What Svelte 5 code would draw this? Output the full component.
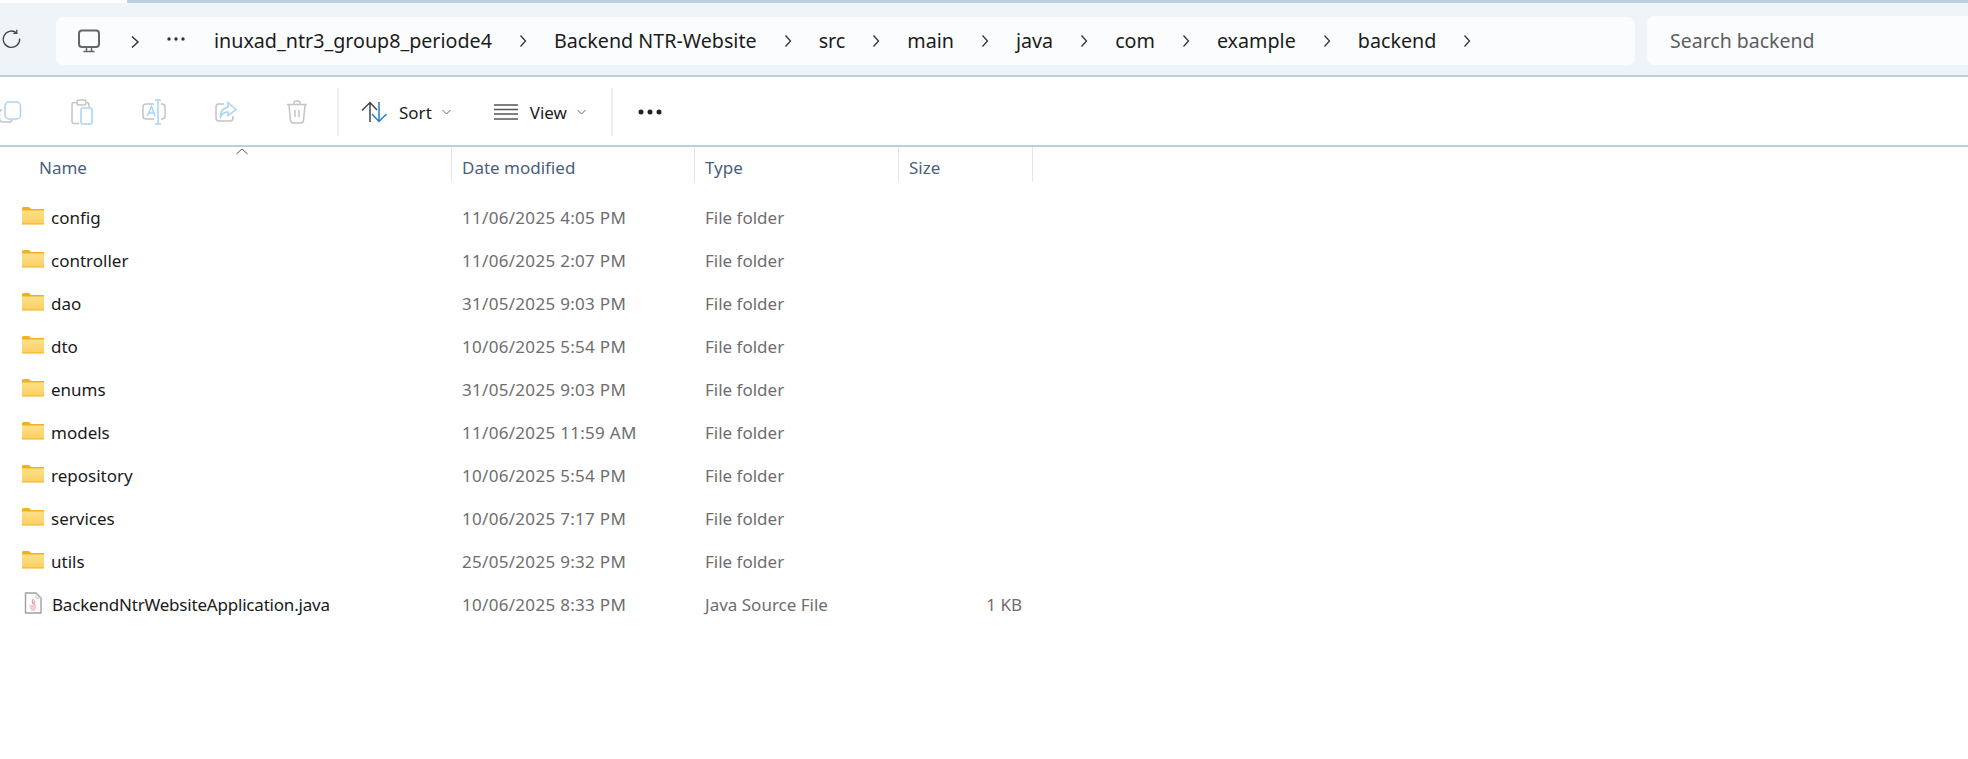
<script>
  const crumbs = ['inuxad_ntr3_group8_periode4','Backend NTR-Website','src','main','java','com','example','backend'];
  const rows = [
    ['config','11/06/2025 4:05 PM'],['controller','11/06/2025 2:07 PM'],['dao','31/05/2025 9:03 PM'],
    ['dto','10/06/2025 5:54 PM'],['enums','31/05/2025 9:03 PM'],['models','11/06/2025 11:59 AM'],
    ['repository','10/06/2025 5:54 PM'],['services','10/06/2025 7:17 PM'],['utils','25/05/2025 9:32 PM']
  ];
</script>

<div class="page">
  <div class="strip"></div>
  <header class="nav">
    <svg class="refresh" width="20" height="20" viewBox="0 0 20 20" fill="none" stroke="#444" stroke-width="1.3"><path d="M15.5 3.8A8.2 8.2 0 1 0 18.6 9.5"/><path d="M15.8 0.8V4.3H12.4"/></svg>
    <div class="address">
      <svg class="monitor" width="24" height="24" viewBox="0 0 24 24" fill="none" stroke="#666" stroke-width="2"><rect x="2" y="1.5" width="20" height="16.5" rx="3"/><path d="M9.5 18.5V22M14.5 18.5V22M6.5 22.5H17.5" stroke-width="1.5"/></svg>
      <svg class="chev first" width="10" height="14" viewBox="0 0 10 14" fill="none" stroke="#333" stroke-width="1.5"><path d="M2 1.5L8 7L2 12.5"/></svg>
      <svg class="ell" width="18" height="4" viewBox="0 0 18 4" fill="#333"><circle cx="2" cy="2" r="1.7"/><circle cx="9" cy="2" r="1.7"/><circle cx="16" cy="2" r="1.7"/></svg>
      {#each crumbs as c}
        <span class="crumb">{c}</span>
        <svg class="chev" width="10" height="14" viewBox="0 0 10 14" fill="none" stroke="#333" stroke-width="1.3"><path d="M2.5 1.5L7.5 7L2.5 12.5"/></svg>
      {/each}
    </div>
    <div class="search">Search backend</div>
  </header>

  <div class="toolbar">
    <div class="tools">
      <svg width="22" height="24" viewBox="0 0 22 24" fill="none" stroke-width="1.5"><path d="M2 9.5Q0 10-.5 12V19Q0 22 3 22H9Q11.5 22 12 20" stroke="#c4c4c4"/><rect x="5" y="2" width="15.5" height="17" rx="4" stroke="#a9d3f5"/></svg>
      <svg width="22" height="26" viewBox="0 0 22 26" fill="none" stroke-width="1.5"><path d="M6 3.5H3Q1 3.5 1 6V22Q1 24.5 3 24.5H8M16 3.5Q18 3.5 18 6V8" stroke="#c4c4c4"/><rect x="6" y="1" width="9" height="5" rx="2" stroke="#c4c4c4"/><rect x="10" y="9" width="11" height="16" rx="2" stroke="#a9d3f5"/></svg>
      <svg width="24" height="26" viewBox="0 0 24 26" fill="none" stroke-width="1.5"><path d="M12 5H4Q1 5 1 8V17Q1 20 4 20H12M19 5H20Q23 5 23 8V17Q23 20 20 20H19" stroke="#c4c4c4"/><path d="M13 1H19M16 1V25M13 25H19M5.5 17L9.5 7.5L13 17M7 14H12" stroke="#a9d3f5"/></svg>
      <svg width="22" height="22" viewBox="0 0 22 22" fill="none" stroke-width="1.5"><path d="M9 3H3.5Q1 3 1 6V17Q1 20 4 20H15Q18 20 18 17V15" stroke="#c4c4c4"/><path d="M13 1.5L21 8.5L13 14.5V11Q8 11 5.5 16Q5 8 13 6Z" stroke="#a9d3f5"/></svg>
      <svg width="22" height="24" viewBox="0 0 22 24" fill="none" stroke="#c4c4c4" stroke-width="1.5"><path d="M1 4.5H21M8 4V3Q8 1 10 1H12Q14 1 14 3V4M3 5L4.5 20.5Q5 23 7.5 23H14.5Q17 23 17.5 20.5L19 5M9 10V17M13 10V17"/></svg>
    </div>
    <span class="sep"></span>
    <button class="tb sort">
      <svg width="26" height="22" viewBox="0 0 26 22" fill="none" stroke-width="1.5"><path d="M9 21V2M1 9.5L9 1.5L16 9" stroke="#444"/><path d="M18 1V20M11 13L18 20.5L25.5 13" stroke="#1a7fd4"/></svg>
      <span>Sort</span>
      <svg class="caret" width="9" height="6" viewBox="0 0 9 6" fill="none" stroke="#666"><path d="M.5 1L4.5 5L8.5 1"/></svg>
    </button>
    <button class="tb view">
      <svg width="24" height="16" viewBox="0 0 24 16" fill="none" stroke="#555" stroke-width="1.5"><path d="M0 1H24M0 5.5H24M0 10H24M0 15H24"/></svg>
      <span>View</span>
      <svg class="caret" width="9" height="6" viewBox="0 0 9 6" fill="none" stroke="#666"><path d="M.5 1L4.5 5L8.5 1"/></svg>
    </button>
    <span class="sep second"></span>
    <svg class="more" width="24" height="6" viewBox="0 0 24 6" fill="#222"><circle cx="3" cy="3" r="2.5"/><circle cx="12" cy="3" r="2.5"/><circle cx="21" cy="3" r="2.5"/></svg>
  </div>

  <div class="grid head">
    <div class="cell first">Name
      <svg class="sortmark" width="12" height="7" viewBox="0 0 12 7" fill="none" stroke="#555"><path d="M.5 6L6 1L11.5 6"/></svg>
    </div>
    <div class="cell">Date modified</div>
    <div class="cell">Type</div>
    <div class="cell">Size</div>
  </div>

  <div class="rows">
    {#each rows as r}
      <div class="grid row">
        <div class="name">
          <svg class="folder" width="22" height="18" viewBox="0 0 22 18"><defs><linearGradient id="fg" x1="0" y1="0" x2="0" y2="1"><stop offset="0" stop-color="#fde08a"/><stop offset="1" stop-color="#fcd062"/></linearGradient></defs><path d="M0 1.5Q0 0 1.5 0H7L9 2H22V17.5H0Z" fill="#f2b01f"/><path d="M0 3.5H22V16.5H0Z" fill="url(#fg)"/></svg>
          <span>{r[0]}</span>
        </div>
        <div class="meta date">{r[1]}</div>
        <div class="meta">File folder</div>
        <div class="meta"></div>
      </div>
    {/each}
    <div class="grid row">
      <div class="name">
        <svg class="java" width="18" height="22" viewBox="0 0 18 22" fill="none"><path d="M1.5 1H12L17 6V21H1.5Z" fill="#fff" stroke="#a0a0a0" stroke-width="1.4"/><path d="M12 1V6H17" stroke="#c8c8c8"/><path d="M9.5 7Q7 10 9.5 12M11 9Q9 11 10.5 13M5.5 14H12.5M6 16H12M7 18H11" stroke="#e59a9f" stroke-width="1.2"/></svg>
        <span class="file">BackendNtrWebsiteApplication.java</span>
      </div>
      <div class="meta date">10/06/2025 8:33 PM</div>
      <div class="meta">Java Source File</div>
      <div class="meta size">1 KB</div>
    </div>
  </div>
</div>

<style>
  :global(html, body) { margin: 0; background: #fff; overflow: hidden; }
  .page { width: 1968px; height: 759px; overflow: hidden; font-family: "Noto Sans", "Open Sans", sans-serif; font-size: 17px; }
  .strip { height: 3px; margin-left: 127px; background: #bccfdf; }
  .nav { height: 72px; display: flex; align-items: center; background: #eff4f8; border-bottom: 2px solid #bccfdf; }
  .refresh { margin-left: 1px; flex: none; }
  .address { margin-left: 35px; width: 1579px; height: 48px; box-sizing: border-box; margin-top: 3px; padding-left: 21px; flex: none; display: flex; align-items: center; background: #fbfcfe; border-radius: 7px; color: #1c1c1c; font-size: 19.7px; }
  .monitor { flex: none; }
  .chev { flex: none; margin: 0 26px 0 26px; }
  .chev.first { margin: 2px 0 0 29px; }
  .ell { flex: none; margin: -4px 29px 0 27px; }
  .crumb { white-space: nowrap; letter-spacing: 0; }
  .search { margin-left: 12px; flex: 1; height: 49px; margin-top: 2px; box-sizing: border-box; padding-left: 23px; display: flex; align-items: center; background: #fbfcfe; border-radius: 7px 0 0 7px; color: #5e5e5e; font-size: 19.5px; }
  .toolbar { height: 70px; padding-top: 2px; box-sizing: border-box; display: flex; align-items: center; background: #fff; border-bottom: 2px solid #bccfdf; }
  .tools { width: 340px; margin-left: -3px; padding-left: 3px; box-sizing: border-box; display: flex; align-items: center; gap: 49px; flex: none; }
  .sep { width: 2px; height: 48px; background: #efefef; flex: none; }
  .sep.second { margin-left: 25px; }
  .tb { border: 0; background: none; padding: 0; font: inherit; color: #1c1c1c; display: flex; align-items: center; }
  .sort { margin-left: 22px; }
  .sort span { margin-left: 12px; }
  .view { margin-left: 43px; }
  .view span { margin-left: 12px; }
  .caret { margin-left: 10px; }
  .more { margin-left: 25px; }
  .grid { display: grid; grid-template-columns: 452px 243px 204px 134px; }
  .head { height: 41px; }
  .cell { position: relative; padding-left: 10px; line-height: 41px; height: 35px; color: #4a5f7d; border-right: 1px solid #e5e5e5; }
  .cell.first { padding-left: 39px; }
  .sortmark { position: absolute; left: 236px; top: 1px; }
  .rows { padding-top: 8px; }
  .row { height: 43px; align-items: center; }
  .name { display: flex; align-items: center; color: #1a1a1a; padding-left: 22px; }
  .name span { margin-left: 7px; white-space: nowrap; }
  .folder { margin-top: -4px; flex: none; }
  .java { margin: -3px 0 0 2px; flex: none; }
  .name .file { margin-left: 10px; letter-spacing: -.2px; }
  .meta { padding-left: 10px; color: #6e6e6e; white-space: nowrap; }
  .date { letter-spacing: .3px; }
  .size { text-align: right; padding-right: 11px; }
</style>
